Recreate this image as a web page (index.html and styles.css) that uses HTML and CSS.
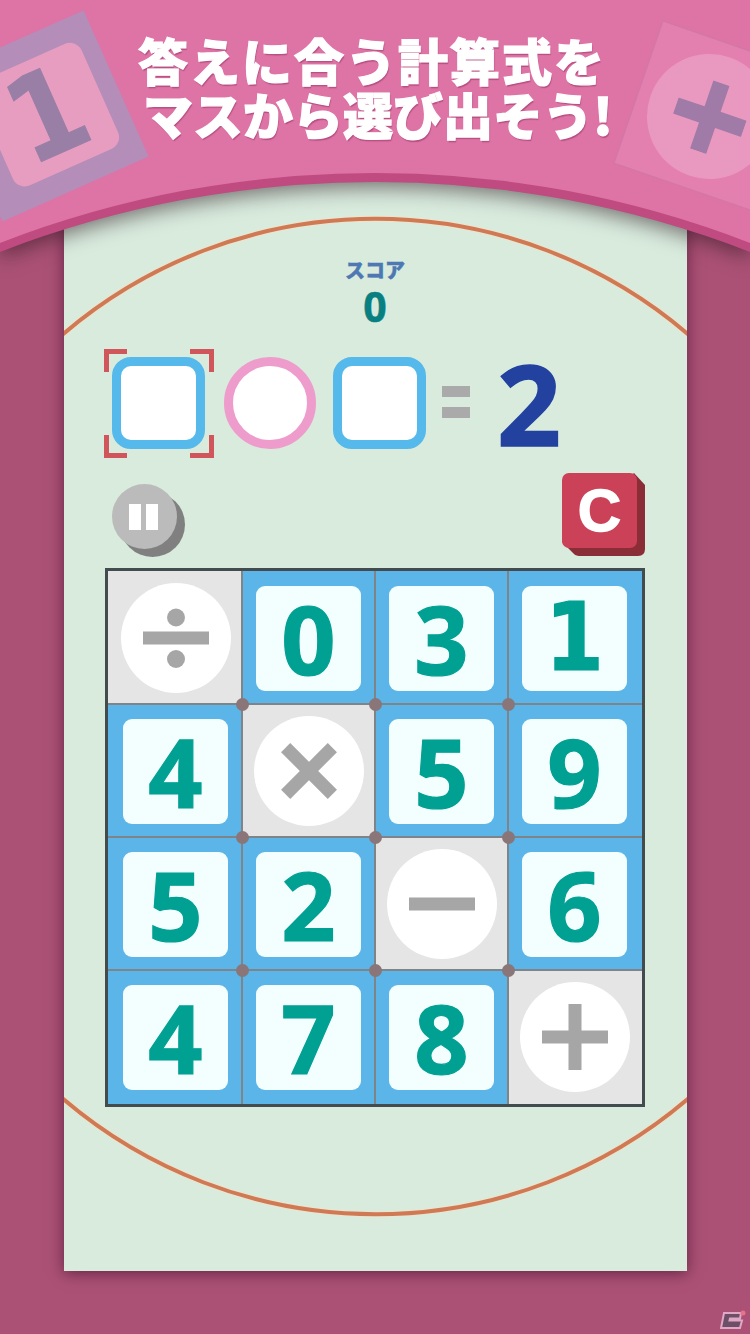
FILE: index.html
```html
<!DOCTYPE html>
<html lang="ja">
<head>
<meta charset="utf-8">
<title>スコア</title>
<link rel="stylesheet" href="styles.css">
</head>
<body>
<main class="board-panel">
  <svg class="rings" viewBox="0 0 623 1271" aria-hidden="true">
    <path class="ring-halo" d="M-2 335 A481 481 0 0 1 625 335"/>
    <path class="ring-halo" d="M-2 1098 A481 481 0 0 0 625 1098"/>
    <path class="ring" d="M-2 335 A481 481 0 0 1 625 335"/>
    <path class="ring" d="M-2 1098 A481 481 0 0 0 625 1098"/>
  </svg>

  <section class="score">
    <div class="score-label">スコア</div>
    <div class="score-value">0</div>
  </section>

  <section class="equation">
    <div class="slot slot-active">
      <svg class="slot-marks" viewBox="0 0 110 109" aria-hidden="true">
        <path d="M2.5 23V2.5H23M86 2.5H107.5V23M2.5 86V106.5H23M86 106.5H107.5V86"/>
      </svg>
    </div>
    <div class="slot slot-op"></div>
    <div class="slot"></div>
    <div class="equals"><i></i><i></i></div>
    <div class="target">2</div>
  </section>

  <section class="controls">
    <button class="pause" type="button" aria-label="pause"><i></i><i></i></button>
    <button class="clear" type="button">
      <svg class="clear-body" viewBox="0 0 83 83" aria-hidden="true">
        <path class="clear-side" d="M72 0L83 12V76Q83 83 76 83H19Q14 83 12 81L0 69Z"/>
        <rect class="clear-face" width="75" height="75" rx="7"/>
      </svg>
      <span class="clear-label">C</span>
    </button>
  </section>

  <section class="grid">
    <div class="cell cell-op"><span class="disc"><svg viewBox="0 0 80 80"><rect x="7" y="33.5" width="66" height="13"/><circle cx="40" cy="19.5" r="9"/><circle cx="40" cy="61" r="9"/></svg></span><b class="dot"></b></div>
    <div class="cell"><span class="tile">0</span><b class="dot"></b></div>
    <div class="cell"><span class="tile">3</span><b class="dot"></b></div>
    <div class="cell"><span class="tile tile-footed">1</span></div>

    <div class="cell"><span class="tile">4</span><b class="dot"></b></div>
    <div class="cell cell-op"><span class="disc"><svg viewBox="0 0 80 80"><g transform="rotate(45 40 40)"><rect x="7" y="33.5" width="66" height="13"/><rect x="33.5" y="7" width="13" height="66"/></g></svg></span><b class="dot"></b></div>
    <div class="cell"><span class="tile">5</span><b class="dot"></b></div>
    <div class="cell"><span class="tile">9</span></div>

    <div class="cell"><span class="tile">5</span><b class="dot"></b></div>
    <div class="cell"><span class="tile">2</span><b class="dot"></b></div>
    <div class="cell cell-op"><span class="disc"><svg viewBox="0 0 80 80"><rect x="7" y="33.5" width="66" height="13"/></svg></span><b class="dot"></b></div>
    <div class="cell"><span class="tile">6</span></div>

    <div class="cell"><span class="tile">4</span></div>
    <div class="cell"><span class="tile">7</span></div>
    <div class="cell"><span class="tile">8</span></div>
    <div class="cell cell-op"><span class="disc"><svg viewBox="0 0 80 80"><path d="M33.5 7H46.5V33.5H73V46.5H46.5V73H33.5V46.5H7V33.5H33.5Z"/></svg></span></div>
  </section>
</main>

<header class="banner">
  <svg class="banner-shape" viewBox="0 0 750 260" aria-hidden="true">
    <path class="banner-rim" d="M0 0H750V252A1039 1039 0 0 0 0 252Z"/>
    <path class="banner-fill" d="M0 0H750V243A1039 1039 0 0 0 0 243Z"/>
  </svg>
  <div class="block block-num"><div class="block-inner">1</div></div>
  <div class="block block-op"><div class="block-disc"><svg viewBox="0 0 72 72" aria-hidden="true"><path d="M27.5 0H44.5V27.5H72V44.5H44.5V72H27.5V44.5H0V27.5H27.5Z"/></svg></div></div>
  <h1 class="headline">
    <span class="line line-one">答えに合う計算式を</span>
    <span class="line line-two">マスから選び出そう!</span>
  </h1>
</header>

<svg class="brand" viewBox="0 0 26 20" aria-hidden="true">
  <path class="brand-mark" d="M4 3H21L20 8.5H10L9.5 10.5H22L20 18H1Z"/>
  <circle class="brand-dot" cx="23" cy="3" r="2.5"/>
</svg>
</body>
</html>
```
FILE: styles.css
```css
* { box-sizing: border-box; }

html, body { margin: 0; height: 100%; }

body {
  width: 750px;
  height: 1334px;
  overflow: hidden;
  position: relative;
  background: #ab5175;
  font-family: "Open Sans", "Noto Sans CJK JP", sans-serif;
}

/* Play area */
.board-panel {
  position: relative;
  width: 623px;
  height: 1271px;
  margin-left: 64px;
  padding: 258px 42px 0 41px;
  background: #d8ebdd;
  box-shadow: 0 2px 14px rgba(50, 5, 35, .6);
  display: flex;
  flex-direction: column;
  align-items: flex-start;
}

.rings {
  position: absolute;
  inset: 0;
  width: 623px;
  height: 1271px;
}
.ring, .ring-halo { fill: none; }
.ring { stroke: #cf7a54; stroke-width: 4; }
.ring-halo { stroke: #f2e2c8; stroke-width: 5.5; }

/* Score */
.score {
  position: relative;
  align-self: center;
  width: 100%;
  text-align: center;
  height: 71px;
}
.score-label {
  font-family: "Noto Sans CJK JP", sans-serif;
  font-weight: 900;
  font-size: 20px;
  line-height: 24px;
  color: #4d78b3;
  -webkit-text-stroke: .4px #4d78b3;
}
.score-value {
  font-weight: 700;
  font-size: 41px;
  line-height: 42px;
  color: #087f80;
  margin-top: 3px;
  -webkit-text-stroke: .5px #087f80;
}

/* Equation line */
.equation {
  position: relative;
  display: flex;
  align-items: flex-start;
  height: 92px;
  margin-top: 28px;
  margin-left: 7px;
}
.slot {
  position: relative;
  width: 93px;
  height: 92px;
  background: #fff;
  border: 9.5px solid #55b9ec;
  border-radius: 19px;
  margin-right: 19px;
}
.slot-op {
  border-color: #ee9ccb;
  border-radius: 50%;
  width: 92px;
  margin-right: 17px;
}
.slot-marks {
  position: absolute;
  left: -17.5px;
  top: -17.5px;
  width: 110px;
  height: 109px;
}
.slot-marks path {
  fill: none;
  stroke: #d0565b;
  stroke-width: 5;
}
.equals {
  display: flex;
  flex-direction: column;
  gap: 10px;
  width: 28px;
  margin: 29px 0 0 -3px;
}
.equals i {
  display: block;
  height: 11px;
  background: #aaa;
}
.target {
  font-weight: 700;
  font-size: 112px;
  line-height: 92px;
  color: #2342a0;
  margin-left: 27px;
  -webkit-text-stroke: 1.5px #2342a0;
}

/* Pause and clear */
.controls {
  display: flex;
  justify-content: space-between;
  align-items: flex-start;
  width: 540px;
  height: 95px;
  margin-top: 24px;
  padding-left: 7px;
}
.pause, .clear {
  border: 0;
  padding: 0;
  background: none;
  position: relative;
}
.pause {
  width: 65px;
  height: 65px;
  margin-top: 11px;
  padding-right: 2px;
  border-radius: 50%;
  background: #bbb;
  box-shadow: 8px 8px 0 #808080;
  display: flex;
  justify-content: center;
  align-items: center;
  gap: 5px;
}
.pause i {
  display: block;
  width: 12px;
  height: 26px;
  background: #fff;
}
.clear {
  width: 83px;
  height: 83px;
}
.clear-body {
  display: block;
  width: 83px;
  height: 83px;
}
.clear-side { fill: #8b2d37; }
.clear-face { fill: #cb4158; }
.clear-label {
  position: absolute;
  left: 0;
  top: 0;
  width: 75px;
  height: 75px;
  color: #fff;
  font-weight: 700;
  font-size: 60px;
  line-height: 75px;
  text-align: center;
  -webkit-text-stroke: 1.5px #fff;
}

/* Number grid: the gaps show through as the thin lines between cells */
.grid {
  display: grid;
  grid-template-columns: 133px 131px 131px 133px;
  grid-template-rows: 132px 131px 131px 133px;
  gap: 2px;
  width: 540px;
  height: 539px;
  border-style: solid;
  border-color: #424b4d;
  border-width: 3px;
  background: #7f8489;
}
.cell {
  position: relative;
  display: flex;
  justify-content: center;
  align-items: center;
  padding-top: 1px;
  background: #5bb5e8;
}
.cell:nth-child(-n+4) { padding-top: 2px; }
.cell:nth-child(n+13) { padding-bottom: 2px; }
.cell:nth-child(4n+1) { padding-left: 2px; }
.cell:nth-child(4n) { padding-right: 2px; }
.cell-op { background: #e5e5e5; }
.tile {
  display: flex;
  justify-content: center;
  align-items: center;
  width: 105px;
  height: 105px;
  border-radius: 9px;
  background: #f3fffe;
  color: #00a093;
  font-weight: 700;
  font-size: 95px;
  line-height: 1;
  -webkit-text-stroke: 1.2px #00a093;
}
.tile-footed {
  font-family: "DejaVu Sans", sans-serif;
  font-stretch: condensed;
  font-size: 94px;
}
.disc {
  display: flex;
  justify-content: center;
  align-items: center;
  width: 110px;
  height: 110px;
  border-radius: 50%;
  background: #fff;
}
.disc svg {
  display: block;
  width: 80px;
  height: 80px;
  fill: #a6a6a6;
}
.dot {
  position: absolute;
  right: -7.5px;
  bottom: -7.5px;
  width: 13px;
  height: 13px;
  border-radius: 50%;
  background: #8a7678;
  z-index: 2;
}

/* Top banner */
.banner {
  position: absolute;
  left: 0;
  top: 0;
  width: 750px;
  height: 260px;
  margin: 0;
}
.banner-shape {
  position: absolute;
  inset: 0;
  width: 750px;
  height: 260px;
  overflow: visible;
  filter: drop-shadow(0 6px 10px rgba(40, 20, 30, .55));
}
.banner-rim { fill: #bf4b80; }
.banner-fill { fill: #de73a5; }

.block {
  position: absolute;
  display: flex;
  justify-content: center;
  align-items: center;
}
.block-num {
  left: -37px;
  top: 36px;
  width: 160px;
  height: 160px;
  background: #b58db9;
  transform: rotate(-24deg);
}
.block-inner {
  width: 115px;
  height: 115px;
  margin-left: 9px;
  border-radius: 13px;
  background: #e79dc0;
  color: #997fa6;
  font-family: "DejaVu Sans", sans-serif;
  font-stretch: condensed;
  font-weight: 700;
  font-size: 118px;
  line-height: 115px;
  text-align: center;
  -webkit-text-stroke: 1px #997fa6;
}
.block-op {
  left: 635px;
  top: 42px;
  width: 149px;
  height: 149px;
  background: #e480b0;
  box-shadow: 0 0 0 1px rgba(190, 130, 170, .5);
  transform: rotate(19deg);
}
.block-disc {
  display: flex;
  justify-content: center;
  align-items: center;
  width: 125px;
  height: 125px;
  border-radius: 50%;
  background: #e999bf;
}
.block-disc svg {
  width: 72px;
  height: 72px;
  fill: #a07ba8;
}

.headline {
  position: absolute;
  left: 0;
  top: 0;
  width: 750px;
  margin: 0;
  color: #fff;
  font-family: "Noto Sans CJK JP", sans-serif;
  font-weight: 900;
  text-shadow: 1px 2px 1px rgba(150, 50, 100, .55);
  -webkit-text-stroke: 1.2px #fff;
}
.line {
  position: absolute;
  white-space: nowrap;
  line-height: 56px;
}
.line-one {
  left: 138px;
  top: 31px;
  font-size: 50px;
  letter-spacing: 2px;
}
.line-two {
  left: 143px;
  top: 85px;
  font-size: 50px;
  letter-spacing: 0;
}

/* Corner site mark */
.brand {
  position: absolute;
  left: 720px;
  top: 1310px;
  width: 26px;
  height: 20px;
}
.brand-mark {
  fill: #6e4f68;
  stroke: #e0a8c4;
  stroke-width: 2;
}
.brand-dot { fill: #e8728a; }
```
